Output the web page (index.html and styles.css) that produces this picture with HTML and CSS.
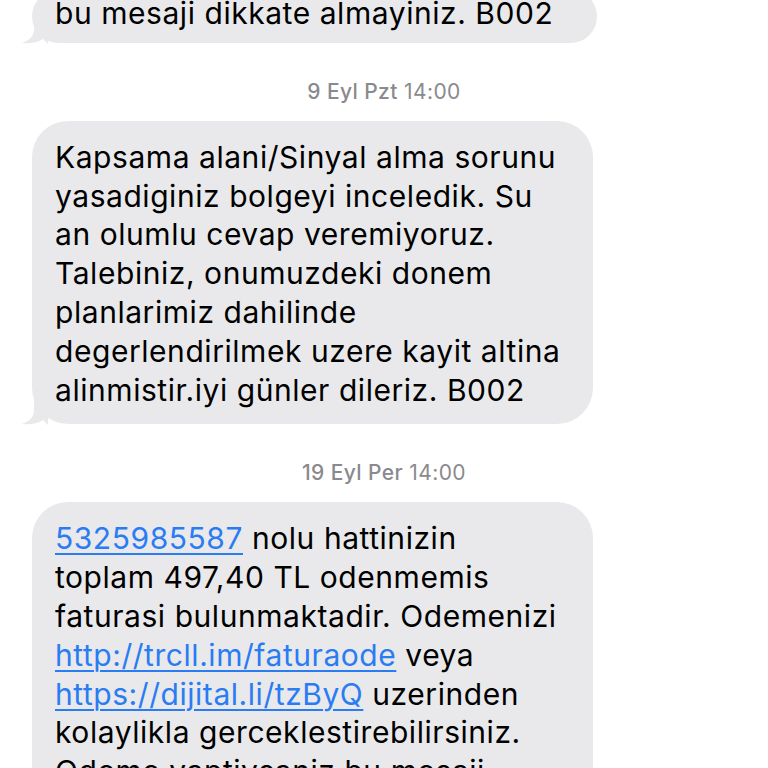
FILE: index.html
```html
<!DOCTYPE html>
<html lang="tr">
<head>
<meta charset="utf-8">
<link rel="stylesheet" href="styles.css">
</head>
<body>
<div class="thread">
  <div class="bubble first">
    bu mesaji dikkate almayiniz. B002
    <svg class="tail" width="26" height="26" viewBox="0 0 26 26"><path d="M12 0 L12 11 C12 18 8 22 0 25 C7 26 15 25 21 21 L26 26 L26 0 Z" /></svg>
  </div>
  <div class="stamp"><b>9 Eyl Pzt</b> 14:00</div>
  <div class="bubble">
    Kapsama alani/Sinyal alma sorunu<br>
    yasadiginiz bolgeyi inceledik. Su<br>
    an olumlu cevap veremiyoruz.<br>
    Talebiniz, onumuzdeki donem<br>
    planlarimiz dahilinde<br>
    degerlendirilmek uzere kayit altina<br>
    alinmistir.iyi günler dileriz. B002
    <svg class="tail" width="26" height="26" viewBox="0 0 26 26"><path d="M12 0 L12 11 C12 18 8 22 0 25 C7 26 15 25 21 21 L26 26 L26 0 Z" /></svg>
  </div>
  <div class="stamp"><b>19 Eyl Per</b> 14:00</div>
  <div class="bubble">
    <a class="link">5325985587</a> nolu hattinizin<br>
    toplam 497,40 TL odenmemis<br>
    faturasi bulunmaktadir. Odemenizi<br>
    <a class="link">http://trcll.im/faturaode</a> veya<br>
    <a class="link">https://dijital.li/tzByQ</a> uzerinden<br>
    kolaylikla gerceklestirebilirsiniz.<br>
    Odeme yaptiysaniz bu mesaji<br>
    dikkate almayiniz. B002
  </div>
</div>
</body>
</html>
```
FILE: styles.css
```css
html, body {
  margin: 0;
  padding: 0;
  background: #ffffff;
  overflow: hidden;
}
body {
  width: 768px;
  height: 768px;
  font-family: Inter, "Noto Sans", sans-serif;
}
.thread {
  display: flex;
  flex-direction: column;
  align-items: flex-start;
  margin-top: -10px;
}
.bubble {
  position: relative;
  box-sizing: border-box;
  width: 561px;
  margin-left: 32px;
  padding: 17px 18px 15px 23px;
  background: #e9e9eb;
  border-radius: 36px;
  color: #000000;
  font-size: 30px;
  letter-spacing: 0.55px;
  line-height: 38.8px;
  white-space: nowrap;
}
.bubble.first {
  width: 565px;
  padding-top: 4px;
  padding-bottom: 10px;
}
.tail {
  position: absolute;
  left: -10px;
  bottom: -1px;
  fill: #e9e9eb;
}
.stamp {
  align-self: stretch;
  text-align: center;
  color: #8a8a8e;
  font-size: 21px;
  letter-spacing: 0.4px;
  line-height: 24px;
  padding: 37px 0 17px;
}
.stamp b {
  font-weight: 500;
}
.link {
  color: #2a7cf3;
  text-decoration: underline;
  text-decoration-thickness: 2px;
  text-underline-offset: 4px;
}
```
